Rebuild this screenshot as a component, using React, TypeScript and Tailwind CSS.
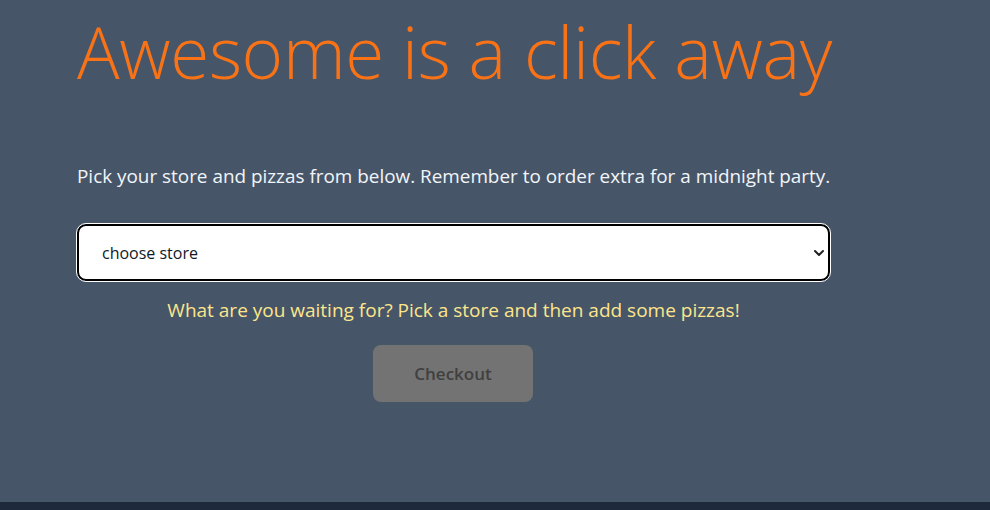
import React from "react";

export default function App() {
  return (
    <div className="w-[990px] h-[510px] flex flex-col bg-[#475569]" style={{ fontFamily: '"Open Sans", "Noto Sans", sans-serif' }}>
      <div className="flex-1 flex flex-col pl-[77px]">
        <div className="w-[760px] flex flex-col">
          <h1 className="text-[71px] leading-[96px] font-light text-[#f97316] whitespace-nowrap tracking-[-0.35px] mt-[4px]">
            Awesome is a click away
          </h1>
          <p className="mt-[63px] text-[18.9px] leading-[26px] text-[#f1f5f9] whitespace-nowrap">
            Pick your store and pizzas from below. Remember to order extra for a midnight party.
          </p>
          <div className="w-[753px] mt-[35px] h-[57px] rounded-[9px] bg-white border-2 border-black outline outline-1 outline-white flex items-center justify-between pl-[23px] pr-[2px]">
            <span className="text-[16px] text-[#111827]">choose store</span>
            <svg width="12" height="12" viewBox="0 0 12 12" className="mr-[1px]">
              <path d="M2 4 L6 8 L10 4" fill="none" stroke="#222" strokeWidth="2" strokeLinecap="round" strokeLinejoin="round" />
            </svg>
          </div>
          <p className="w-[753px] mt-[16px] text-center text-[19px] leading-[26px] text-[#fde68a] whitespace-nowrap">
            What are you waiting for? Pick a store and then add some pizzas!
          </p>
          <div className="w-[752px] flex justify-center mt-[22px]">
            <button className="w-[160px] h-[57px] rounded-lg bg-[#737373] text-[#404040] text-[17px] font-semibold">
              Checkout
            </button>
          </div>
        </div>
      </div>
      <div className="h-[8px] bg-[#1e293b]" />
    </div>
  );
}
